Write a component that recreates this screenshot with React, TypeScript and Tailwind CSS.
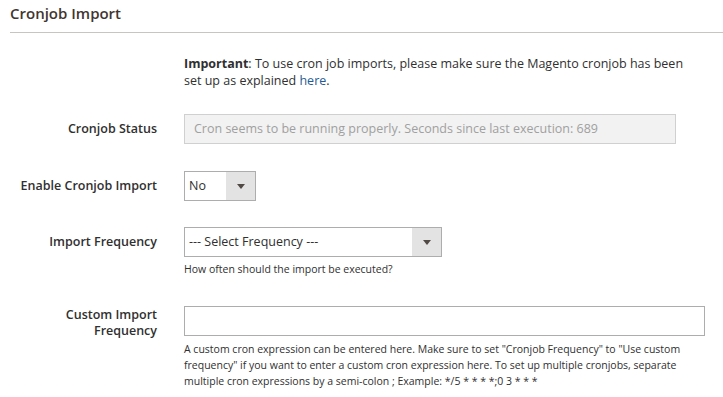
import React from "react";

const Arrow = () => (
  <svg width="8" height="5" viewBox="0 0 8 5" className="block">
    <path d="M0 0 L8 0 L4 5 Z" fill="#514943" />
  </svg>
);

export default function App() {
  return (
    <div
      className="w-[723px] h-[397px] bg-white text-[#303030] overflow-hidden"
      style={{ fontFamily: '"Open Sans", "Noto Sans", sans-serif' }}
    >
      <div className="ml-[10px] pt-[3px] pb-[9px] border-b border-[#c8c4bf]">
        <div className="text-[15px] leading-[20px] font-semibold text-[#41362f]">Cronjob Import</div>
      </div>

      <div className="flex mt-[22px]">
        <div className="w-[157px] shrink-0" />
        <div className="ml-[27px] text-[12.5px] leading-[17px] w-[515px]">
          <span className="font-bold">Important</span>: To use cron job imports, please make sure the Magento cronjob has been set up as explained{" "}
          <span className="text-[#1f5b94]">here</span>.
        </div>
      </div>

      <div className="flex items-center mt-[25px]">
        <div className="w-[157px] shrink-0 text-right text-[12.5px] font-semibold">Cronjob Status</div>
        <div className="ml-[27px] w-[492px] h-[30px] border border-[#d0d0d0] bg-[#f2f2f2] flex items-center pl-[9px] text-[12.5px] text-[#a0a0a0]">
          Cron seems to be running properly. Seconds since last execution: 689
        </div>
      </div>

      <div className="flex items-center mt-[27px]">
        <div className="w-[157px] shrink-0 text-right text-[12.5px] font-semibold">Enable Cronjob Import</div>
        <div className="ml-[27px] w-[72px] h-[30px] border border-[#adadad] bg-white flex text-[12.5px]">
          <div className="flex-1 flex items-center pl-[4px]">No</div>
          <div className="w-[29px] bg-[#e3e3e3] flex items-center justify-center">
            <Arrow />
          </div>
        </div>
      </div>

      <div className="flex items-start mt-[26px]">
        <div className="w-[157px] shrink-0 text-right text-[12.5px] font-semibold leading-[30px]">Import Frequency</div>
        <div className="ml-[27px]">
          <div className="w-[258px] h-[30px] border border-[#adadad] bg-white flex text-[12.5px]">
            <div className="flex-1 flex items-center pl-[4px]">--- Select Frequency ---</div>
            <div className="w-[29px] bg-[#e3e3e3] flex items-center justify-center">
              <Arrow />
            </div>
          </div>
          <div className="text-[10.5px] leading-[16px] mt-[4px]">How often should the import be executed?</div>
        </div>
      </div>

      <div className="flex items-start mt-[29px]">
        <div className="w-[157px] shrink-0 text-right text-[12.5px] font-semibold leading-[16px] pt-[1px]">
          Custom Import
          <br />
          Frequency
        </div>
        <div className="ml-[27px]">
          <div className="w-[521px] h-[30px] border border-[#adadad] bg-white" />
          <div className="text-[10.5px] leading-[16px] mt-[5px] w-[530px]">
            A custom cron expression can be entered here. Make sure to set "Cronjob Frequency" to "Use custom frequency" if you want to enter a custom cron expression here. To set up multiple cronjobs, separate multiple cron expressions by a semi-colon ; Example: */5 * * * *;0 3 * * *
          </div>
        </div>
      </div>
    </div>
  );
}
